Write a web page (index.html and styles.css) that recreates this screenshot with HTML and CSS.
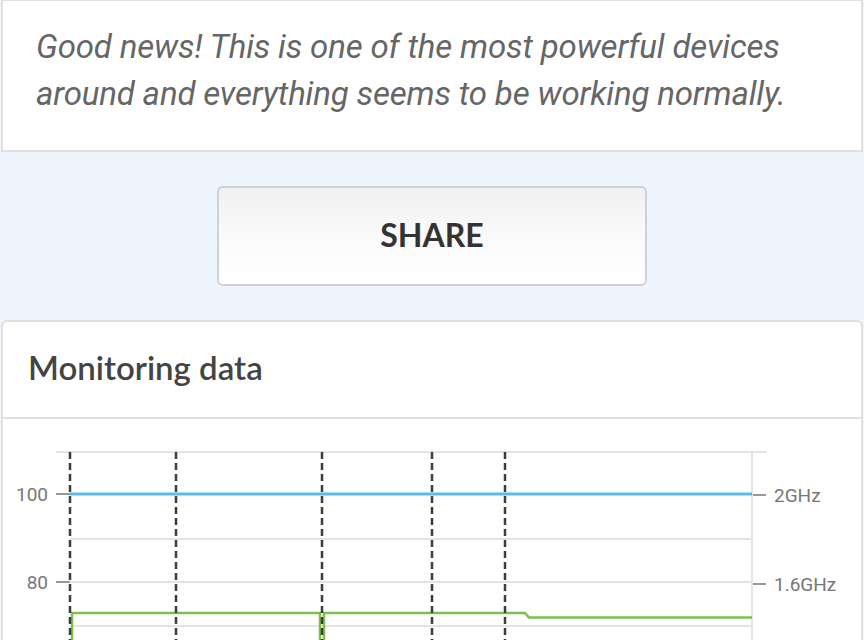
FILE: index.html
```html
<!DOCTYPE html>
<html>
<head>
<meta charset="utf-8">
<link rel="stylesheet" href="styles.css">
</head>
<body>
<section class="intro">
  <p class="intro-text">Good news! This is one of the most powerful devices around and everything seems to be working normally.</p>
</section>
<section class="share-area">
  <button class="share-btn">SHARE</button>
</section>
<section class="card">
  <header class="card-head"><h2 class="card-title">Monitoring data</h2></header>
  <div class="chart">
    <svg class="chart-svg" width="858" height="240" viewBox="3 419 858 240">
      <g class="grid">
        <line x1="56" y1="452" x2="767" y2="452"/>
        <line x1="70" y1="539" x2="752" y2="539"/>
        <line x1="70" y1="582" x2="752" y2="582"/>
        <line x1="70" y1="626" x2="752" y2="626"/>
        <line x1="752" y1="452" x2="752" y2="660"/>
      </g>
      <g class="ticks">
        <line x1="56" y1="494" x2="70" y2="494"/>
        <line x1="56" y1="582" x2="70" y2="582"/>
        <line x1="753" y1="495" x2="766" y2="495"/>
        <line x1="753" y1="584" x2="766" y2="584"/>
      </g>
      <line class="blue" x1="70" y1="494" x2="752" y2="494"/>
      <path class="green" d="M72,660 V613 H320 V660 M324,660 V613 H525 L529,617.5 H752"/>
      <g class="dash">
        <line x1="70" y1="452" x2="70" y2="660"/>
        <line x1="176" y1="452" x2="176" y2="660"/>
        <line x1="322" y1="452" x2="322" y2="660"/>
        <line x1="432" y1="452" x2="432" y2="660"/>
        <line x1="505" y1="452" x2="505" y2="660"/>
      </g>
      <g class="labels">
        <text x="48" y="501" text-anchor="end">100</text>
        <text x="48" y="589" text-anchor="end">80</text>
        <text x="774" y="502">2GHz</text>
        <text x="774" y="591">1.6GHz</text>
      </g>
    </svg>
  </div>
</section>
</body>
</html>
```

FILE: styles.css
```css
html, body {
  margin: 0;
  padding: 0;
}
body {
  background: #eef5fd;
  width: 864px;
  height: 640px;
  overflow: hidden;
}
.intro {
  margin: 0 1px;
  background: #fff;
  border: 2px solid #e0e0e0;
  border-top-width: 1px;
  padding: 22px 34px 33px 33px;
}
.intro-text {
  margin: 0;
  font-family: Roboto, "Liberation Sans", sans-serif;
  font-style: italic;
  font-size: 33px;
  letter-spacing: -0.15px;
  line-height: 47px;
  color: #666;
}
.share-area {
  display: flex;
  justify-content: center;
  padding: 34px 0;
}
.share-btn {
  width: 430px;
  height: 100px;
  border: 2px solid #cfd1d4;
  border-radius: 6px;
  background: linear-gradient(to bottom, #f1f1f1 0%, #fafafa 50%, #fff 100%);
  font-family: Lato, "Liberation Sans", sans-serif;
  font-weight: 700;
  font-size: 32px;
  color: #333;
  padding: 0 0 4px;
}
.card {
  margin: 0 1px;
  background: #fff;
  border: 2px solid #e0e0e0;
  border-bottom: none;
  border-radius: 6px 6px 0 0;
  height: 330px;
}
.card-head {
  height: 97px;
  box-sizing: border-box;
  display: flex;
  align-items: center;
  padding: 0 25px 5px;
  border-bottom: 2px solid #e0e0e0;
}
.card-title {
  margin: 0;
  font-family: Lato, "Liberation Sans", sans-serif;
  font-weight: 600;
  font-size: 33px;
  color: #444;
}
.chart-svg {
  display: block;
}
.grid line {
  stroke: #e4e4e4;
  stroke-width: 2;
}
.ticks line {
  stroke: #999;
  stroke-width: 2;
}
.blue {
  stroke: #5bbbe2;
  stroke-width: 3;
}
.green {
  fill: none;
  stroke: #7dc04e;
  stroke-width: 2.5;
}
.dash line {
  stroke: #3d3d3d;
  stroke-width: 2.5;
  stroke-dasharray: 7 4;
}
.labels text {
  font-family: Roboto, "Liberation Sans", sans-serif;
  font-size: 19px;
  fill: #777;
}
```
